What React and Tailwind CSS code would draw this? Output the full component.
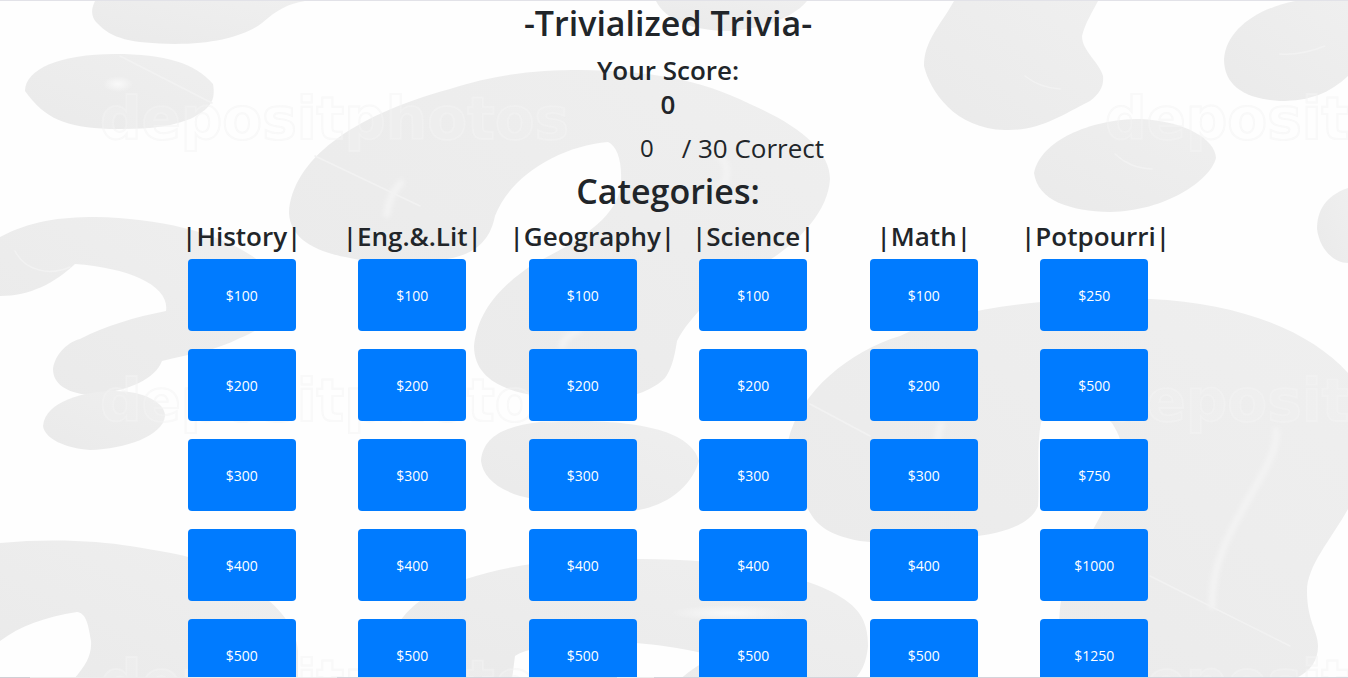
const categories = [
  { name: 'History', values: [100, 200, 300, 400, 500] },
  { name: 'Eng.&.Lit', values: [100, 200, 300, 400, 500] },
  { name: 'Geography', values: [100, 200, 300, 400, 500] },
  { name: 'Science', values: [100, 200, 300, 400, 500] },
  { name: 'Math', values: [100, 200, 300, 400, 500] },
  { name: 'Potpourri', values: [250, 500, 750, 1000, 1250] },
];

const watermarks = [
  [100, 138],
  [1105, 138],
  [100, 420],
  [1105, 420],
  [100, 701],
  [1105, 701],
];

const shapes = [
  'M95,0 C90,10 92,17 97,22 C112,38 130,42 175,43 C215,43 245,35 262,22 C278,8 288,3 305,0Z',
  'M25,90 C25,68 60,53 115,53 C165,53 195,62 213,83 C216,100 210,108 190,118 C165,128 140,128 110,128 C65,126 45,118 25,90Z',
  'M0,236 C30,220 60,216 95,216 C160,217 220,232 255,257 C290,285 285,320 240,337 C215,350 190,353 162,360 C155,378 130,390 90,394 C65,392 53,382 53,368 C55,352 70,340 80,338 C105,325 135,316 166,310 C170,285 130,267 75,263 C55,282 30,295 0,295Z',
  'M43,425 C45,400 85,390 115,390 C145,390 165,402 165,415 C163,435 125,448 90,449 C65,447 45,438 43,425Z',
  'M0,542 C50,537 100,540 130,545 C160,550 180,553 195,558 C250,580 295,610 298,650 L298,678 L74,678 C85,665 92,655 91,640 C88,620 85,612 77,611 C45,616 20,625 0,640Z',
  'M289,212 C292,160 350,115 450,88 C500,72 540,69 580,69 C650,70 700,78 750,103 C800,125 830,150 830,178 C828,215 790,247 765,262 C720,285 690,315 677,340 C674,360 670,370 665,377 C640,402 590,402 540,395 C500,390 474,375 474,345 C478,310 500,285 535,262 C590,235 621,210 621,180 C622,160 617,145 608,141 C560,145 510,175 495,215 C490,240 475,255 440,259 C400,265 370,262 350,257 C310,250 290,235 289,212Z',
  'M481,460 C483,435 505,425 540,421 C620,417 690,425 699,460 C690,490 660,508 630,510 C590,505 550,503 520,495 C495,487 483,475 481,460Z',
  'M656,0 C665,18 690,30 730,30 C765,28 795,15 807,0Z',
  'M954,0 C940,25 924,40 924,65 C930,90 955,128 1005,129 C1040,130 1060,115 1090,100 C1100,92 1104,85 1103,75 C1100,62 1082,50 1082,35 C1085,22 1093,10 1098,0Z',
  'M1034,172 C1040,140 1090,118 1140,118 C1185,120 1215,138 1216,157 C1210,180 1165,210 1110,211 C1070,210 1038,200 1034,172Z',
  'M1348,75 C1330,92 1310,100 1280,100 C1245,98 1224,85 1224,58 C1226,30 1255,8 1295,0 L1348,0Z',
  'M1348,187 C1325,195 1317,210 1317,228 C1320,250 1335,262 1348,262Z',
  'M788,440 C800,390 850,350 900,335 C960,305 1050,296 1150,298 C1240,302 1310,330 1348,372 L1348,508 C1330,540 1307,565 1307,590 C1307,620 1318,630 1318,645 C1318,660 1310,672 1293,678 L1065,678 C1058,650 1058,610 1062,595 C1070,560 1095,530 1105,505 C1125,475 1130,450 1112,422 C1095,405 1060,400 1041,421 C1036,450 1040,480 1038,505 C1030,525 1000,532 978,535 C940,542 900,545 860,540 C810,530 805,515 788,440Z',
  'M385,678 C385,640 395,600 466,578 C520,560 580,557 640,558 C720,558 790,570 830,590 C860,605 868,620 868,645 C866,665 860,672 855,678 L680,678 C690,670 700,662 715,656 C680,644 620,640 600,640 C560,640 525,648 515,655 L512,678Z',
];

const highlights = [
  'M1276,430 C1280,470 1210,530 1212,605',
  'M387,213 C388,202 393,190 401,182',
  'M941,424 C938,432 937,440 936,448',
  'M720,155 C730,165 728,178 720,190',
  'M562,345 C564,338 570,333 578,330',
];

const fineLines = [
  'M1025,75 C1035,83 1045,87 1060,88',
  'M1115,153 C1125,162 1135,167 1152,168',
  'M1280,53 C1295,54 1310,51 1325,45',
  'M315,155 L420,205',
  'M810,403 L870,435',
  'M1150,575 L1290,645',
  'M120,55 L212,102',
  'M15,250 C25,270 50,275 70,266',
];

function Backdrop() {
  return (
    <svg
      aria-hidden="true"
      viewBox="0 0 1348 678"
      preserveAspectRatio="xMinYMin slice"
      className="pointer-events-none absolute inset-0 h-full w-full"
    >
      <defs>
        <linearGradient id="tone" x1="0" y1="1" x2="1" y2="0">
          <stop offset="0" stopColor="#eaeaea" />
          <stop offset="1" stopColor="#efefef" />
        </linearGradient>
        <radialGradient id="shine">
          <stop offset="0" stopColor="#f9f9f9" />
          <stop offset="1" stopColor="#f9f9f9" stopOpacity="0" />
        </radialGradient>
        <filter id="soft" x="-100%" y="-50%" width="300%" height="200%">
          <feGaussianBlur stdDeviation="2" />
        </filter>
      </defs>
      {shapes.map((d) => (
        <path key={d} d={d} fill="url(#tone)" />
      ))}
      <ellipse cx="118" cy="83" rx="15" ry="8" fill="url(#shine)" />
      <ellipse cx="730" cy="612" rx="60" ry="8" fill="url(#shine)" />
      <g fill="none" stroke="#f3f3f3" strokeWidth="7" strokeLinecap="round" filter="url(#soft)">
        {highlights.map((d) => (
          <path key={d} d={d} />
        ))}
      </g>
      <g fill="none" stroke="#f2f2f2" strokeWidth="1.5" strokeLinecap="round">
        {fineLines.map((d) => (
          <path key={d} d={d} />
        ))}
      </g>
      {watermarks.map(([x, y]) => (
        <text
          key={`${x}-${y}`}
          x={x}
          y={y}
          fill="#ffffff"
          fillOpacity="0.1"
          stroke="#f4f4f4"
          strokeOpacity="0.5"
          strokeWidth="2"
          className="font-['DejaVu_Sans',sans-serif] text-[58px] font-bold"
        >
          depositphotos
        </text>
      ))}
    </svg>
  );
}

export default function App() {
  return (
    <div className="relative flex h-screen flex-col border-t border-[#e2e2e8] bg-[#fefefe] font-['Open_Sans','Noto_Sans',sans-serif] text-[#212529]">
      <Backdrop />
      <main className="relative min-h-0 flex-1 overflow-y-auto pr-3 text-center [scrollbar-width:none]">
        <h1 className="mb-2 text-[34px] leading-[44px] font-semibold">-Trivialized Trivia-</h1>
        <h2 className="text-[26px] leading-[34px] font-semibold">Your Score:</h2>
        <p className="mb-3 text-[26px] leading-[34px] font-semibold">0</p>
        <div className="mb-2 flex items-start justify-center gap-7 pl-32 leading-[30px]">
          <span className="text-[24px]">0</span>
          <span className="text-[26px]">/ 30 Correct</span>
        </div>
        <h2 className="mb-2 text-[34px] leading-[40px] font-semibold">Categories:</h2>
        <div className="mx-auto grid max-w-[1023px] grid-cols-6">
          {categories.map((category) => (
            <section key={category.name} className="min-w-0 px-3">
              <h3 className="mb-1.5 text-[26px] leading-[34px] font-semibold whitespace-nowrap">
                |{category.name}|
              </h3>
              <div className="flex flex-col items-center gap-[18px]">
                {category.values.map((value) => (
                  <button
                    key={value}
                    type="button"
                    className="h-[72px] w-[108px] rounded bg-[#007bff] text-[14px] text-white"
                  >
                    ${value}
                  </button>
                ))}
              </div>
            </section>
          ))}
        </div>
      </main>
      <div className="relative flex h-px shrink-0 bg-[#ececec]">
        <div className="w-[30px] bg-[#cfcfd4]" />
        <div className="ml-[307px] w-[280px] bg-[#d4d4da]" />
        <div className="ml-[37px] flex-1 bg-[#d4d4da]" />
      </div>
    </div>
  );
}
